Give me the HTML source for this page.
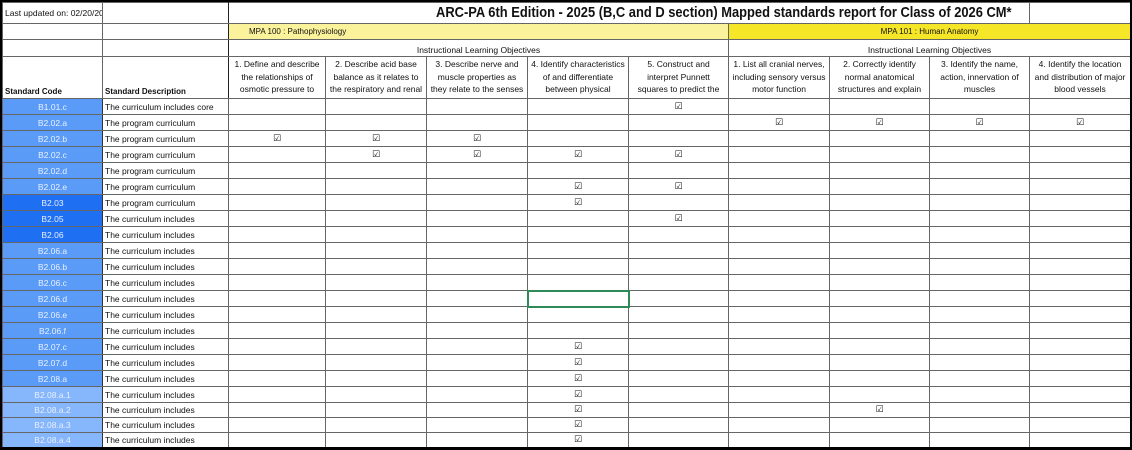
<!DOCTYPE html>
<html><head><meta charset="utf-8"><style>
*{margin:0;padding:0;box-sizing:border-box}
body{width:1132px;height:450px;overflow:hidden;background:#000;font-family:"Liberation Sans",sans-serif;}
.wrap{position:absolute;left:2px;top:2px;width:1128px;height:445px;background:#fff;overflow:hidden}
table{border-collapse:collapse;table-layout:fixed;width:1128px}
td{border:1px solid #666;font-size:8.5px;color:#111;white-space:nowrap;overflow:hidden;padding:0 2px;vertical-align:middle;line-height:12px}
.code{background:#5b9bf8;color:#e8f0ff;text-align:center;border-right:1px solid #333}
.dk{background:#1f6ff3}
.lt{background:#86b6fb}
.c{text-align:center;font-family:"DejaVu Sans",sans-serif;font-size:9px}
.hd td.h{white-space:normal;text-align:center;vertical-align:top;line-height:12.5px;padding-top:1px}
.hd td.h div{height:38px;overflow:hidden}
.ttl{display:inline-block;transform:scaleX(0.86);transform-origin:left center;font-size:15px;font-weight:bold}
</style></head><body><div class="wrap">
<table>
<colgroup><col style="width:100px"><col style="width:126px"><col style="width:97px"><col style="width:101px"><col style="width:101px"><col style="width:101px"><col style="width:100px"><col style="width:101px"><col style="width:100px"><col style="width:100px"><col style="width:101px"></colgroup>
<tr style="height:21px"><td>Last updated on: 02/20/20</td><td style="border-right:1px solid #222"></td><td colspan="8" style="text-align:left;padding-left:207px;overflow:visible"><span class="ttl">ARC-PA 6th Edition - 2025 (B,C and D section) Mapped standards report for Class of 2026 CM*</span></td><td></td></tr>
<tr style="height:16px"><td></td><td style="border-right:1px solid #222"></td><td colspan="5" style="background:#fbf29c;font-size:8px;padding-left:20px">MPA 100 : Pathophysiology</td><td colspan="4" style="background:#f6e628;text-align:center;font-size:8px">MPA 101 : Human Anatomy</td></tr>
<tr style="height:17px"><td></td><td style="border-right:1px solid #222"></td><td colspan="5" style="text-align:center;vertical-align:bottom;font-size:8.5px;border-bottom:none">Instructional Learning Objectives</td><td colspan="4" style="text-align:center;vertical-align:bottom;font-size:8.5px;border-bottom:none">Instructional Learning Objectives</td></tr>
<tr class="hd" style="height:42px"><td style="font-weight:bold;vertical-align:bottom;font-size:8px">Standard Code</td><td style="font-weight:bold;vertical-align:bottom;font-size:8px;border-right:1px solid #222">Standard Description</td>
<td class="h"><div>1. Define and describe the relationships of osmotic pressure to urine</div></td>
<td class="h"><div>2. Describe acid base balance as it relates to the respiratory and renal</div></td>
<td class="h"><div>3. Describe nerve and muscle properties as they relate to the senses of</div></td>
<td class="h"><div>4. Identify characteristics of and differentiate between physical</div></td>
<td class="h"><div>5. Construct and interpret Punnett squares to predict the</div></td>
<td class="h"><div>1. List all cranial nerves, including sensory versus motor function</div></td>
<td class="h"><div>2. Correctly identify normal anatomical structures and explain</div></td>
<td class="h"><div>3. Identify the name, action, innervation of muscles</div></td>
<td class="h"><div>4. Identify the location and distribution of major blood vessels</div></td></tr>
<tr style="height:16px"><td class="code">B1.01.c</td><td>The curriculum includes core</td><td></td><td></td><td></td><td></td><td class="c">☑</td><td></td><td></td><td></td><td></td></tr>
<tr style="height:16px"><td class="code">B2.02.a</td><td>The program curriculum</td><td></td><td></td><td></td><td></td><td></td><td class="c">☑</td><td class="c">☑</td><td class="c">☑</td><td class="c">☑</td></tr>
<tr style="height:16px"><td class="code">B2.02.b</td><td>The program curriculum</td><td class="c">☑</td><td class="c">☑</td><td class="c">☑</td><td></td><td></td><td></td><td></td><td></td><td></td></tr>
<tr style="height:16px"><td class="code">B2.02.c</td><td>The program curriculum</td><td></td><td class="c">☑</td><td class="c">☑</td><td class="c">☑</td><td class="c">☑</td><td></td><td></td><td></td><td></td></tr>
<tr style="height:16px"><td class="code">B2.02.d</td><td>The program curriculum</td><td></td><td></td><td></td><td></td><td></td><td></td><td></td><td></td><td></td></tr>
<tr style="height:16px"><td class="code">B2.02.e</td><td>The program curriculum</td><td></td><td></td><td></td><td class="c">☑</td><td class="c">☑</td><td></td><td></td><td></td><td></td></tr>
<tr style="height:16px"><td class="code dk">B2.03</td><td>The program curriculum</td><td></td><td></td><td></td><td class="c">☑</td><td></td><td></td><td></td><td></td><td></td></tr>
<tr style="height:16px"><td class="code dk">B2.05</td><td>The curriculum includes</td><td></td><td></td><td></td><td></td><td class="c">☑</td><td></td><td></td><td></td><td></td></tr>
<tr style="height:16px"><td class="code dk">B2.06</td><td>The curriculum includes</td><td></td><td></td><td></td><td></td><td></td><td></td><td></td><td></td><td></td></tr>
<tr style="height:16px"><td class="code">B2.06.a</td><td>The curriculum includes</td><td></td><td></td><td></td><td></td><td></td><td></td><td></td><td></td><td></td></tr>
<tr style="height:16px"><td class="code">B2.06.b</td><td>The curriculum includes</td><td></td><td></td><td></td><td></td><td></td><td></td><td></td><td></td><td></td></tr>
<tr style="height:16px"><td class="code">B2.06.c</td><td>The curriculum includes</td><td></td><td></td><td></td><td></td><td></td><td></td><td></td><td></td><td></td></tr>
<tr style="height:16px"><td class="code">B2.06.d</td><td>The curriculum includes</td><td></td><td></td><td></td><td style="outline:2px solid #2e8b57;outline-offset:-1px"></td><td></td><td></td><td></td><td></td><td></td></tr>
<tr style="height:16px"><td class="code">B2.06.e</td><td>The curriculum includes</td><td></td><td></td><td></td><td></td><td></td><td></td><td></td><td></td><td></td></tr>
<tr style="height:16px"><td class="code">B2.06.f</td><td>The curriculum includes</td><td></td><td></td><td></td><td></td><td></td><td></td><td></td><td></td><td></td></tr>
<tr style="height:16px"><td class="code">B2.07.c</td><td>The curriculum includes</td><td></td><td></td><td></td><td class="c">☑</td><td></td><td></td><td></td><td></td><td></td></tr>
<tr style="height:16px"><td class="code">B2.07.d</td><td>The curriculum includes</td><td></td><td></td><td></td><td class="c">☑</td><td></td><td></td><td></td><td></td><td></td></tr>
<tr style="height:16px"><td class="code">B2.08.a</td><td>The curriculum includes</td><td></td><td></td><td></td><td class="c">☑</td><td></td><td></td><td></td><td></td><td></td></tr>
<tr style="height:16px"><td class="code lt">B2.08.a.1</td><td>The curriculum includes</td><td></td><td></td><td></td><td class="c">☑</td><td></td><td></td><td></td><td></td><td></td></tr>
<tr style="height:15px"><td class="code lt">B2.08.a.2</td><td>The curriculum includes</td><td></td><td></td><td></td><td class="c">☑</td><td></td><td></td><td class="c">☑</td><td></td><td></td></tr>
<tr style="height:15px"><td class="code lt">B2.08.a.3</td><td>The curriculum includes</td><td></td><td></td><td></td><td class="c">☑</td><td></td><td></td><td></td><td></td><td></td></tr>
<tr style="height:15px"><td class="code lt">B2.08.a.4</td><td>The curriculum includes</td><td></td><td></td><td></td><td class="c">☑</td><td></td><td></td><td></td><td></td><td></td></tr>
</table></div></body></html>
